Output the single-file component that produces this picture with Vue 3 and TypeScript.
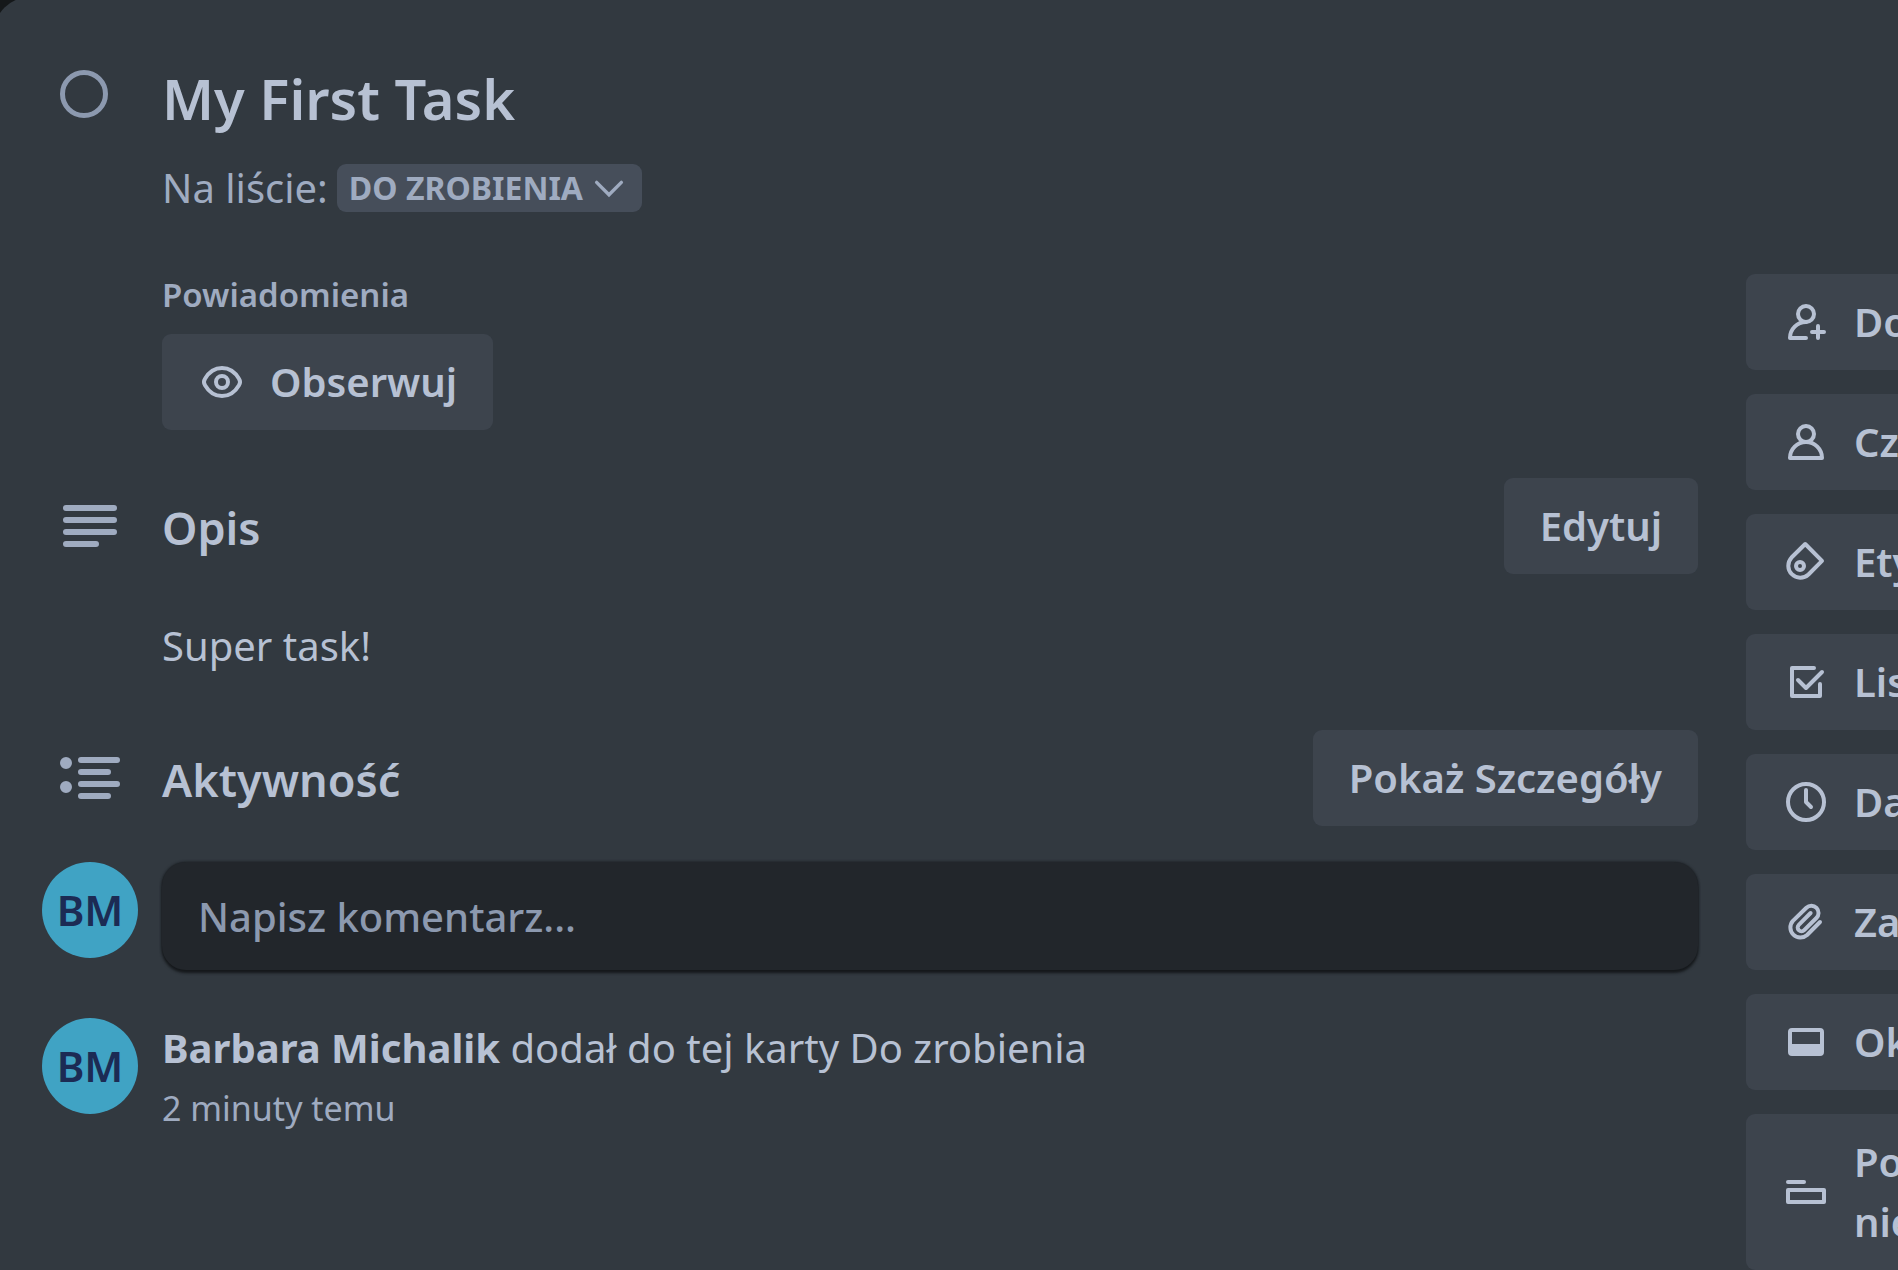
<script setup lang="ts">
import { ref } from 'vue'

interface SideAction {
  label: string
  paths: string[]
  filled?: boolean
}

const done = ref(false)
const list = ref('todo')
const comment = ref('')

const actions: SideAction[] = [
  {
    label: 'Dołącz',
    paths: ['M12 4a4 4 0 1 1 0 8 4 4 0 0 1 0-8z', 'M12 20H4C4 15.6 7.6 12 12 12', 'M15 17h6M18 14v6'],
  },
  {
    label: 'Członkowie',
    paths: ['M12 4a4 4 0 1 1 0 8 4 4 0 0 1 0-8z', 'M4 20c0-4.4 3.6-8 8-8s8 3.6 8 8z'],
  },
  {
    label: 'Etykiety',
    paths: ['M4.76 9.76L11.6 3L20 11.4L13.24 18.24A6 6 0 0 1 4.76 9.76z', 'M9 12a2 2 0 1 1 0 4 2 2 0 0 1 0-4z'],
  },
  {
    label: 'Lista zadań',
    paths: ['M16 5H5v14h14v-6', 'M8 11l4 4 8-8'],
  },
  {
    label: 'Daty',
    paths: ['M12 3a9 9 0 1 1 0 18 9 9 0 0 1 0-18z', 'M12 6v6l2.5 2.5'],
  },
  {
    label: 'Załącznik',
    paths: [
      'M19 12l-6.46 6.5a5 5 0 0 1-7.08-7.04L12.2 4.9a3.5 3.5 0 0 1 5 5.1l-6.1 6.1a1.9 1.9 0 0 1-2.7-2.7l5.9-5.9',
    ],
  },
  {
    label: 'Okładka',
    filled: true,
    paths: ['M5 5h14a2 2 0 0 1 2 2v10a2 2 0 0 1-2 2H5a2 2 0 0 1-2-2V7a2 2 0 0 1 2-2zM5 7v6h14V7z'],
  },
  {
    label: 'Pola niestandardowe',
    paths: ['M3 7h8', 'M3 11h18v6H3z'],
  },
]
</script>

<template>
  <div class="backdrop">
    <div class="card">
      <header class="row">
        <div class="gutter">
          <input v-model="done" class="complete" type="checkbox" aria-label="My First Task" />
        </div>
        <div class="heading">
          <h1>My First Task</h1>
          <div class="in-list">
            <label for="list">Na liście:</label>
            <span class="picker">
              <select id="list" v-model="list">
                <option value="todo">Do zrobienia</option>
              </select>
              <svg viewBox="0 0 16 16" aria-hidden="true"><path d="M2.5 5.500L8 11l5.500-5.500" /></svg>
            </span>
          </div>
        </div>
      </header>

      <div class="columns">
        <main>
          <section class="notifications">
            <h3>Powiadomienia</h3>
            <button class="btn" type="button">
              <svg class="icon" viewBox="0 0 24 24" aria-hidden="true">
                <path d="M12 5C8.2 5 5.6 6.8 3.5 10.4c-.7 1.1-.7 2.1 0 3.2C5.6 17.2 8.2 19 12 19s6.400-1.800 8.500-5.400c.7-1.100.7-2.100 0-3.200C18.400 6.800 15.800 5 12 5z" />
                <circle cx="12" cy="12" r="3" />
              </svg>
              Obserwuj
            </button>
          </section>

          <section class="description">
            <div class="row">
              <div class="gutter">
                <svg class="section-icon" viewBox="0 0 24 24" aria-hidden="true">
                  <path d="M4 6h16M4 10h16M4 14h16M4 18h10" />
                </svg>
              </div>
              <h2>Opis</h2>
              <button class="btn" type="button">Edytuj</button>
            </div>
            <p>Super task!</p>
          </section>

          <section class="activity">
            <div class="row">
              <div class="gutter">
                <svg class="section-icon" viewBox="0 0 24 24" aria-hidden="true">
                  <path d="M9 6h12M9 10h9M9 14h12M9 18h9" />
                  <circle cx="4" cy="7" r="1" /><circle cx="4" cy="15" r="1" />
                </svg>
              </div>
              <h2>Aktywność</h2>
              <button class="btn" type="button">Pokaż Szczegóły</button>
            </div>
            <div class="row comment">
              <div class="gutter"><span class="avatar">BM</span></div>
              <input v-model="comment" type="text" placeholder="Napisz komentarz..." aria-label="Napisz komentarz..." />
            </div>
            <div class="row entry">
              <div class="gutter"><span class="avatar">BM</span></div>
              <div>
                <div class="what"><strong>Barbara Michalik</strong> dodał do tej karty Do zrobienia</div>
                <div class="when">2 minuty temu</div>
              </div>
            </div>
          </section>
        </main>

        <aside>
          <button v-for="action in actions" :key="action.label" class="btn" type="button">
            <svg class="icon" :class="{ filled: action.filled }" viewBox="0 0 24 24" aria-hidden="true">
              <path v-for="d in action.paths" :key="d" :d="d" />
            </svg>
            <span>{{ action.label }}</span>
          </button>
        </aside>
      </div>
    </div>
  </div>
</template>

<style>
body {
  background: #323940;
}
</style>

<style scoped>
* {
  box-sizing: border-box;
}

.backdrop {
  overflow: hidden;
  background: #15181a;
  font-family: "Noto Sans", "Open Sans", sans-serif;
  font-size: 40px;
  line-height: 60px;
  color: #b7c1d3;
}

/* The card reaches past the window at the top left, so its corner is cut. */
.card {
  margin: -3px 0 0 -6px;
  padding: 65px 0 0 48px;
  border-radius: 36px 0 0 0;
  background: #323940;
}

h1,
h2,
h3,
p {
  margin: 0;
}

h1 {
  font-size: 56px;
  font-weight: 600;
  line-height: 72px;
}

h2 {
  flex: 1;
  padding-top: 4px;
  font-size: 45px;
  font-weight: 600;
}

h3 {
  font-size: 33px;
  font-weight: 600;
  line-height: 42px;
  color: #9fabc0;
}

.row {
  display: flex;
  align-items: center;
}

.gutter {
  flex: none;
  display: flex;
  width: 120px;
}

header.row {
  align-items: flex-start;
}

.complete {
  appearance: none;
  width: 48px;
  height: 48px;
  margin: 8px 0 0 18px;
  border: 5px solid #8c99af;
  border-radius: 50%;
}

.in-list {
  display: flex;
  align-items: center;
  gap: 9px;
  margin-top: 24px;
  color: #9fabc0;
}

.picker {
  display: grid;
  align-items: center;
}

.picker > * {
  grid-area: 1 / 1;
}

.picker select {
  appearance: none;
  height: 48px;
  padding: 0 58px 0 12px;
  border: 0;
  border-radius: 9px;
  background: #464e5a;
  color: inherit;
  font: 700 32px/48px "Noto Sans", "Open Sans", sans-serif;
  text-transform: uppercase;
}

.picker svg {
  justify-self: end;
  width: 36px;
  height: 36px;
  margin-right: 15px;
  fill: none;
  stroke: currentColor;
  stroke-width: 1.5;
  stroke-linecap: round;
  pointer-events: none;
}

.columns {
  display: flex;
  align-items: flex-start;
  gap: 48px;
  margin-top: 56px;
}

main {
  flex: 1;
  min-width: 0;
}

.btn {
  display: flex;
  align-items: center;
  gap: 24px;
  padding: 18px 36px;
  border: 0;
  border-radius: 9px;
  background: #3d444d;
  color: inherit;
  font: inherit;
  font-weight: 600;
  text-align: left;
}

.icon,
.section-icon {
  flex: none;
  width: 48px;
  height: 48px;
  fill: none;
  stroke: currentColor;
  stroke-width: 2;
  stroke-linecap: round;
  stroke-linejoin: round;
}

.icon.filled {
  fill: currentColor;
  fill-rule: evenodd;
  stroke: none;
}

.section-icon {
  width: 72px;
  height: 72px;
  margin-left: 12px;
  color: #9fabc0;
}

.notifications {
  padding-left: 120px;
}

.notifications .btn {
  margin-top: 18px;
}

.description {
  margin-top: 48px;
}

.activity {
  margin-top: 54px;
}

.description p {
  margin: 42px 0 0 120px;
}

.comment {
  align-items: flex-start;
  margin-top: 36px;
}

.comment input {
  flex: 1;
  min-width: 0;
  height: 108px;
  padding: 0 36px;
  border: 0;
  border-radius: 24px;
  background: #22262b;
  box-shadow: 0 3px 3px #15181b, 0 0 3px #15181b;
  color: inherit;
  font: inherit;
  font-weight: 500;
}

.comment input::placeholder {
  color: #8c99af;
  opacity: 1;
}

.entry {
  align-items: flex-start;
  margin-top: 48px;
}

.avatar {
  display: flex;
  align-items: center;
  justify-content: center;
  width: 96px;
  height: 96px;
  border-radius: 50%;
  background: #40a3c4;
  color: #1c2b54;
  font-size: 42px;
  font-weight: 600;
}

.when {
  font-size: 34px;
  color: #9fabc0;
}

aside {
  flex: none;
  display: flex;
  flex-direction: column;
  gap: 24px;
  width: 152px;
  overflow: hidden;
}

aside .btn {
  width: 504px;
}
</style>
